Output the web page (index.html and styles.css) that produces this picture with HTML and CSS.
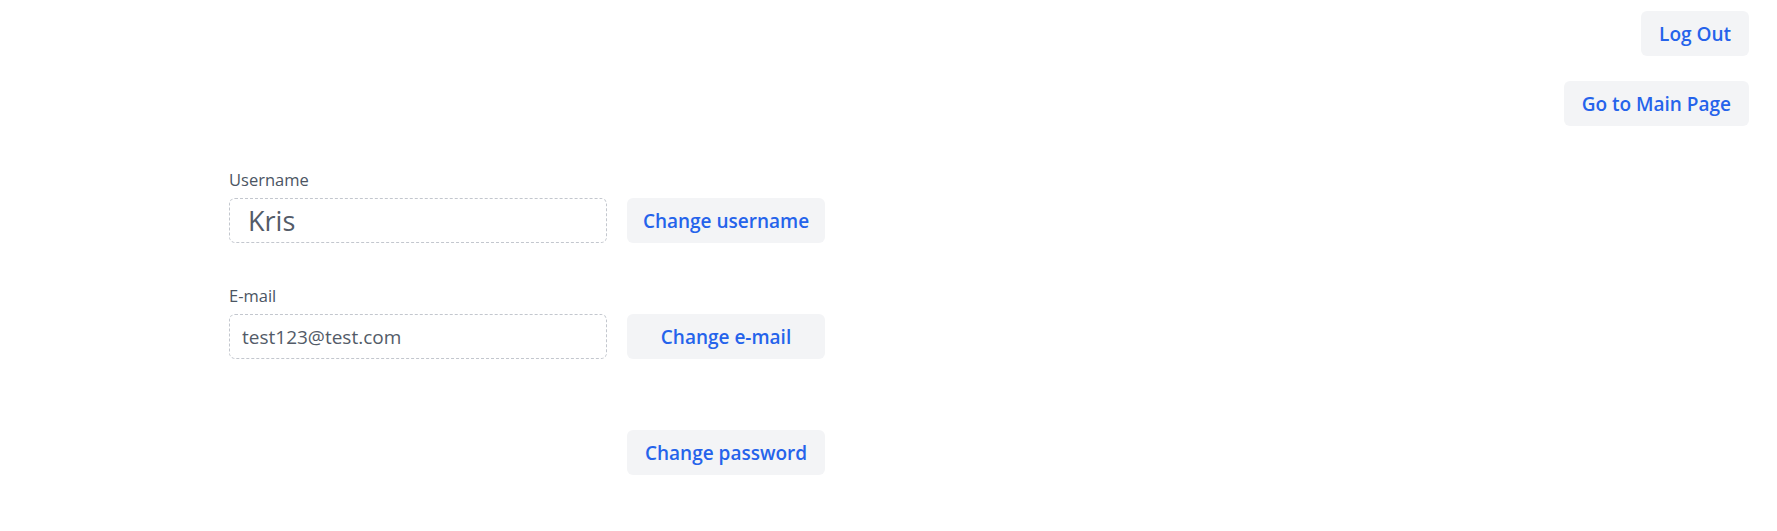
FILE: index.html
```html
<!DOCTYPE html>
<html lang="en">
<head>
<meta charset="utf-8">
<title>Profile</title>
<link rel="stylesheet" href="styles.css">
</head>
<body>
<header class="topbar">
  <button class="btn">Log Out</button>
  <button class="btn">Go to Main Page</button>
</header>
<main class="form">
  <label class="label" for="username">Username</label>
  <input class="field field-lg" id="username" type="text" value="Kris">
  <button class="btn btn-fixed">Change username</button>

  <label class="label label-gap" for="email">E-mail</label>
  <input class="field" id="email" type="text" value="test123@test.com">
  <button class="btn btn-fixed">Change e-mail</button>

  <button class="btn btn-fixed btn-password">Change password</button>
</main>
</body>
</html>
```
FILE: styles.css
```css
html, body {
  margin: 0;
  padding: 0;
  background: #ffffff;
}

body {
  font-family: "Open Sans", "Noto Sans", sans-serif;
}

.topbar {
  display: flex;
  flex-direction: column;
  align-items: flex-end;
  gap: 25px;
  padding: 11px 28px 0 0;
}

.btn {
  height: 45px;
  padding: 0 18px;
  border: none;
  border-radius: 6px;
  background: #f3f4f6;
  color: #2563eb;
  font-family: "Open Sans", "Noto Sans", sans-serif;
  font-size: 19px;
  font-weight: 600;
  cursor: pointer;
}

.form {
  display: grid;
  grid-template-columns: 378px 198px;
  column-gap: 20px;
  padding-left: 229px;
  margin-top: 41px;
}

.label {
  grid-column: 1;
  font-size: 16.5px;
  font-weight: 500;
  line-height: 25px;
  color: #4b5563;
  margin-bottom: 6px;
}

.label-gap {
  margin-top: 40px;
}

.field {
  grid-column: 1;
  box-sizing: border-box;
  height: 45px;
  border: 1px dashed #c3c7ce;
  border-radius: 6px;
  padding: 0 12px;
  font-family: "Open Sans", "Noto Sans", sans-serif;
  font-size: 19px;
  font-weight: 500;
  color: #535b68;
  outline: none;
  background: #fff;
}

.field-lg {
  padding: 0 18px;
  font-size: 27px;
}

.btn-fixed {
  width: 198px;
  padding: 0;
}

.btn-password {
  grid-column: 2;
  margin-top: 71px;
}
```
